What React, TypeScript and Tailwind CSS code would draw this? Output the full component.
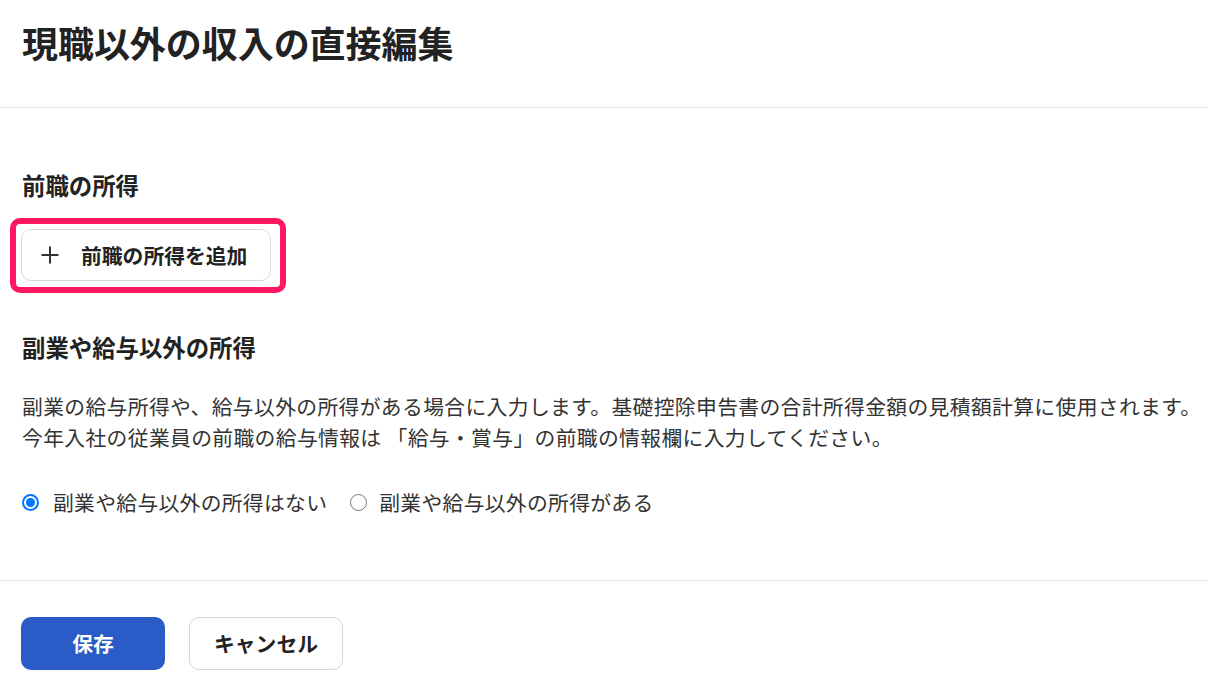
import React from "react";

export default function App() {
  const font = { fontFamily: '"Noto Sans CJK JP", "Noto Sans", sans-serif' };
  return (
    <div className="w-[1208px] h-[693px] bg-white text-[#222] overflow-hidden" style={font}>
      <div className="h-[108px] border-b border-[#e3e3e3] px-[22px] pt-[20px]">
        <h1 className="text-[36px] leading-[44px] font-bold tracking-[-0.05px]">現職以外の収入の直接編集</h1>
      </div>
      <div className="px-[22px] pt-[60px] h-[473px] border-b border-[#e3e3e3]">
        <h2 className="text-[23.4px] leading-[34px] font-bold">前職の所得</h2>
        <div className="mt-[16px] ml-[-12px] inline-flex border-[6px] border-[#ff1760] rounded-[10px] pt-[5px] pb-[6px] pl-[5px] pr-[9px]">
          <button className="w-[250px] h-[52px] flex items-center border border-[#d9d9d9] rounded-[10px] bg-white pl-[18px]">
            <svg width="20" height="20" viewBox="0 0 20 20" className="text-[#333]">
              <path d="M10 1.5v17M1.5 10h17" stroke="currentColor" strokeWidth="2" fill="none" />
            </svg>
            <span className="ml-[21px] text-[20.8px] font-bold leading-none">前職の所得を追加</span>
          </button>
        </div>
        <h2 className="mt-[37px] text-[23.4px] leading-[34px] font-bold">副業や給与以外の所得</h2>
        <p className="mt-[27px] text-[20.8px] leading-[31.2px] text-[#333] tracking-[0.35px] whitespace-nowrap">
          副業の給与所得や、給与以外の所得がある場合に入力します。基礎控除申告書の合計所得金額の見積額計算に使用されます。
          <br />
          今年入社の従業員の前職の給与情報は 「給与・賞与」の前職の情報欄に入力してください。
        </p>
        <div className="mt-[34px] flex items-center h-[31px] text-[20.8px] text-[#333] tracking-[0.3px]">
          <label className="flex items-center">
            <span className="w-[17px] h-[17px] rounded-full border-[2px] border-[#0075ff] flex items-center justify-center">
              <span className="w-[9px] h-[9px] rounded-full bg-[#0075ff]" />
            </span>
            <span className="ml-[14px]">副業や給与以外の所得はない</span>
          </label>
          <label className="flex items-center ml-[23px]">
            <span className="w-[17px] h-[17px] rounded-full border-[1.5px] border-[#767676]" />
            <span className="ml-[12px]">副業や給与以外の所得がある</span>
          </label>
        </div>
      </div>
      <div className="px-[21px] pt-[36px] flex gap-[24px]">
        <button className="w-[144px] h-[53px] rounded-[10px] bg-[#2a5bc7] text-white text-[20.8px] font-bold">保存</button>
        <button className="w-[154px] h-[53px] rounded-[10px] border border-[#d6d6d6] bg-white text-[#222] text-[20.8px] font-bold">キャンセル</button>
      </div>
    </div>
  );
}
